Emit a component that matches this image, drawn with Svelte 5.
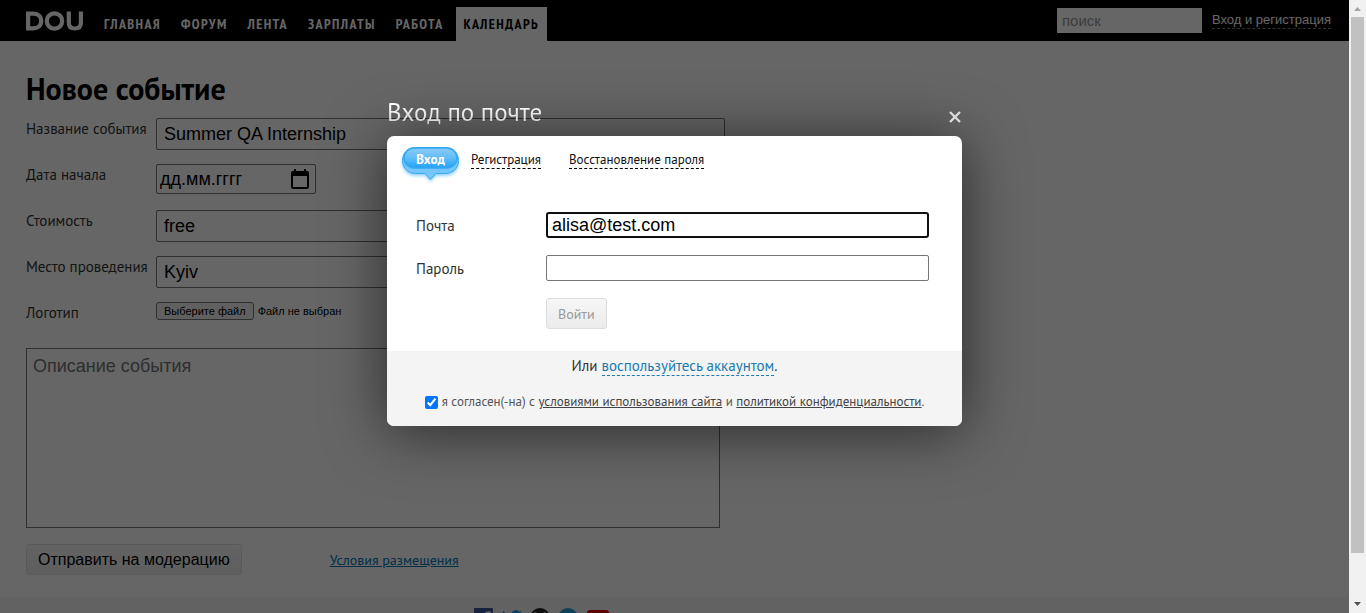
<script>
  const nav = ['Главная', 'Форум', 'Лента', 'Зарплаты', 'Работа', 'Календарь'];
  const active = 'Календарь';
  let search = $state('');
  let title = $state('Summer QA Internship');
  let date = $state('дд.мм.гггг');
  let price = $state('free');
  let place = $state('Kyiv');
  let about = $state('');
  let email = $state('alisa@test.com');
  let password = $state('');
  let agreed = $state(true);
</script>

<div class="window">
  <div class="page">
    <header>
      <a class="logo" href="#main" aria-label="DOU">
        <svg width="57" height="20" viewBox="0 0 57 20" fill="none" stroke="#fff" stroke-width="4.200">
          <path d="M2.100 2.600H7C12 2.600 15.200 5.200 15.200 10S12 17.400 7 17.400H2.100Z" />
          <circle cx="28.500" cy="10" r="7.700" />
          <path d="M42.800 .5V11.500C42.800 15.400 45 17.500 48.900 17.500S54.900 15.400 54.900 11.500V.5" />
        </svg>
      </a>
      <nav>
        {#each nav as item}
          <a href="#{item}" class:active={item === active}>{item}</a>
        {/each}
      </nav>
      <div class="user">
        <input class="search" type="text" placeholder="поиск" aria-label="поиск" bind:value={search} />
        <a href="#login">Вход и регистрация</a>
      </div>
    </header>

    <main>
      <h1>Новое событие</h1>
      <form class="event">
        <div class="row">
          <label for="title">Название события</label>
          <input id="title" class="field" type="text" bind:value={title} />
        </div>
        <div class="row">
          <label for="date">Дата начала</label>
          <div class="date">
            <input id="date" type="text" bind:value={date} />
            <button type="button" aria-label="Календарь">
              <svg width="18" height="20" viewBox="0 0 18 20">
                <path fill="#000" fill-rule="evenodd" d="M3 0H5V2H13V0H15V2H16Q18 2 18 4V18Q18 20 16 20H2Q0 20 0 18V4Q0 2 2 2H3ZM2 7V18H16V7Z" />
              </svg>
            </button>
          </div>
        </div>
        <div class="row">
          <label for="price">Стоимость</label>
          <input id="price" class="field" type="text" bind:value={price} />
        </div>
        <div class="row">
          <label for="place">Место проведения</label>
          <input id="place" class="field" type="text" bind:value={place} />
        </div>
        <div class="row">
          <label for="logo">Логотип</label>
          <div class="file">
            <button type="button">Выберите файл</button>
            <span>Файл не выбран</span>
            <input id="logo" type="file" hidden />
          </div>
        </div>
        <textarea placeholder="Описание события" aria-label="Описание события" bind:value={about}></textarea>
        <div class="actions">
          <button class="submit" type="button">Отправить на модерацию</button>
          <a href="#terms">Условия размещения</a>
        </div>
      </form>
    </main>

    <footer>
      <a href="#facebook" aria-label="Facebook">
        <svg width="20" height="20" viewBox="0 0 20 20">
          <rect width="19" height="20" rx="1" fill="#3b5998" />
          <path fill="#fff" d="M13.500 20V12.500H16L16.500 9.500H13.500V7.500Q13.500 6 15 6H16.700V3.200H14.200Q10.500 3.200 10.500 7V9.500H8V12.500H10.500V20Z" />
        </svg>
      </a>
      <a href="#twitter" aria-label="Twitter">
        <svg width="20" height="20" viewBox="0 0 20 20">
          <path fill="#1da1f2" d="M20 4Q19 4.600 17.700 4.700Q19 3.800 19.500 2.400Q18.200 3.200 16.900 3.400A4.100 4.100 0 0 0 9.900 7.200Q4.700 7 1.400 2.800Q-.2 6 2.700 8.300L.8 7.800Q1 10.900 4.100 11.800L2.300 11.900Q3.300 14.500 6.100 14.700Q3.500 16.700 0 16.400C9 21.800 18.700 16 18 6.100Q19.300 5.200 20 4Z" />
        </svg>
      </a>
      <a href="#github" aria-label="GitHub">
        <svg width="20" height="20" viewBox="0 0 20 20">
          <circle cx="10" cy="10" r="10" fill="#222" />
          <path fill="#fff" d="M4.500 4L7.300 5.100H12.700L15.500 4Q16.600 7 16 10Q15 13.500 12.500 14V20H7.500V14Q5 13.500 4 10Q3.400 7 4.500 4Z" />
        </svg>
      </a>
      <a href="#telegram" aria-label="Telegram">
        <svg width="20" height="20" viewBox="0 0 20 20">
          <circle cx="10" cy="10" r="10" fill="#2aa1da" />
          <path fill="#fff" d="M3.500 10L15.500 5L13.500 15.500L9.700 12.700L8 14.400L7.500 11.400Z" />
        </svg>
      </a>
      <a href="#youtube" aria-label="YouTube">
        <svg width="23" height="20" viewBox="0 0 23 20">
          <rect x="1" y="2" width="22" height="16" rx="3" fill="#f00000" />
          <path fill="#fff" d="M9.500 6V14L16 10Z" />
        </svg>
      </a>
    </footer>

    <div class="overlay">
      <div class="dialog" role="dialog" aria-labelledby="dialog-title">
        <div class="head">
          <h2 id="dialog-title">Вход по почте</h2>
          <button class="close" type="button" aria-label="Закрыть">
            <svg width="12" height="12" viewBox="0 0 12 12">
              <path d="M1 1L11 11M11 1L1 11" stroke="#ddd" stroke-width="2.300" />
            </svg>
          </button>
        </div>
        <div class="card">
          <div class="tabs">
            <button class="bubble" type="button">
              <svg width="65" height="44" viewBox="-4 -2 65 44" aria-hidden="true">
                <defs>
                  <linearGradient id="gloss" x1="0" y1="0" x2="0" y2="1">
                    <stop offset="0" stop-color="#8acbf8" />
                    <stop offset=".5" stop-color="#62bdf8" />
                    <stop offset="1" stop-color="#22a2f8" />
                  </linearGradient>
                  <filter id="glow" x="-20%" y="-20%" width="140%" height="150%">
                    <feDropShadow dx="0" dy="2" stdDeviation="1.500" flood-color="#2aa8f8" flood-opacity=".5" />
                  </filter>
                </defs>
                <path filter="url(#glow)" fill="#74c6fb" stroke="#3ba8ea" d="M13.500 .5H43.500C51 .5 56.500 6 56.500 13.500S51 26.500 43.500 26.500H34L28.500 32.500L23 26.500H13.500C6 26.500 .5 21 .5 13.500S6 .5 13.500 .5Z" />
                <rect x="2" y="1" width="53" height="20" rx="10" fill="url(#gloss)" stroke="#36a8f4" stroke-width="1.500" />
              </svg>
              <span>Вход</span>
            </button>
            <a href="#register">Регистрация</a>
            <a href="#restore">Восстановление пароля</a>
          </div>
          <form class="login">
            <label for="email">Почта</label>
            <input id="email" class="focused" type="text" bind:value={email} />
            <label for="password">Пароль</label>
            <input id="password" type="password" bind:value={password} />
            <button type="button" disabled>Войти</button>
          </form>
          <div class="bottom">
            <p>Или <a href="#account">воспользуйтесь аккаунтом</a>.</p>
            <div class="agree">
              <input id="agree" type="checkbox" bind:checked={agreed} />
              <label for="agree">я согласен(-на) с <a href="#rules">условиями использования сайта</a> и <a href="#privacy">политикой конфиденциальности</a>.</label>
            </div>
          </div>
        </div>
      </div>
    </div>
  </div>

  <div class="scrollbar" aria-hidden="true">
    <svg width="17" height="17" viewBox="0 0 17 17"><path d="M5 11L8.500 7L12 11Z" fill="#a3a3a3" /></svg>
    <div class="thumb"></div>
    <svg width="17" height="17" viewBox="0 0 17 17"><path d="M5 6L8.500 10L12 6Z" fill="#505050" /></svg>
  </div>
</div>

<style>
  :global(body) {
    margin: 0;
  }
  .window {
    display: flex;
    height: 100vh;
    overflow: hidden;
    font-family: 'PT Sans', 'Open Sans', sans-serif;
    font-size: 15px;
    color: #333;
  }
  .window * {
    box-sizing: border-box;
  }
  button,
  input,
  textarea {
    margin: 0;
    font-family: 'Liberation Sans', Arial, sans-serif;
  }
  .page {
    position: relative;
    flex: 1;
    overflow: hidden;
    background: #fff;
  }
  header {
    display: flex;
    height: 41px;
    padding: 0 18px 0 26px;
    background: #000;
  }
  .logo {
    padding-top: 11px;
  }
  nav {
    display: flex;
    gap: 4px;
    margin: 7px 0 0 13px;
  }
  nav a {
    padding: 0 8px;
    color: #fff;
    font: bold 14px/34px 'PT Sans Narrow', 'Roboto Condensed', Roboto, sans-serif;
    letter-spacing: 0.1em;
    text-decoration: none;
    text-transform: uppercase;
  }
  nav a.active {
    background: #fff;
    color: #000;
  }
  .user {
    display: flex;
    align-items: flex-start;
    gap: 10px;
    margin-left: auto;
    padding-top: 8px;
  }
  .search {
    width: 145px;
    height: 25px;
    padding: 0 5px;
    border: 0;
    background: #fff;
    font-size: 15px;
  }
  .search::placeholder {
    color: #999;
  }
  .user a {
    margin-top: 4px;
    border-bottom: 1px dashed #777;
    color: #fff;
    font: 13px/16px 'Liberation Sans', sans-serif;
    text-decoration: none;
  }
  main {
    height: 556px;
    padding: 26px;
  }
  h1 {
    margin: 0 0 7px;
    color: #000;
    font-size: 30px;
    line-height: 44px;
  }
  .event {
    max-width: 699px;
  }
  .row {
    display: flex;
    align-items: flex-start;
    height: 46px;
  }
  .row label {
    width: 130px;
    line-height: 22px;
    white-space: nowrap;
  }
  .field {
    flex: 1;
    height: 32px;
    padding: 0 7px;
    border: 1px solid #767676;
    border-radius: 2px;
    font-size: 18px;
  }
  .date {
    display: flex;
    align-items: center;
    width: 160px;
    height: 30px;
    padding: 0 6px 0 3px;
    border: 1px solid #767676;
    border-radius: 2px;
  }
  .date input {
    flex: 1;
    min-width: 0;
    padding: 0;
    border: 0;
    font-size: 18px;
  }
  .date button {
    display: flex;
    padding: 0;
    border: 0;
    background: none;
  }
  .file {
    display: flex;
    gap: 4px;
    color: #000;
    font: 11px/18px 'Liberation Sans', sans-serif;
  }
  .file button {
    height: 18px;
    padding: 0 7px;
    border: 1px solid #767676;
    border-radius: 3px;
    background: #efefef;
    font-size: 11px;
  }
  textarea {
    display: block;
    width: calc(100% - 5px);
    height: 180px;
    padding: 7px 6px;
    border: 1px solid #767676;
    font-size: 18px;
    line-height: 20px;
    resize: none;
  }
  textarea::placeholder {
    color: #757575;
  }
  .actions {
    display: flex;
    gap: 88px;
    margin-top: 16px;
    font-size: 14px;
    line-height: 32px;
  }
  .submit {
    height: 31px;
    padding: 0 11px;
    border: 1px solid #e0e0e0;
    border-radius: 3px;
    background: linear-gradient(#f8f8f8, #ebebeb);
    color: #000;
    font-size: 16px;
  }
  .actions a {
    color: #0077b5;
  }
  footer {
    display: flex;
    gap: 8px;
    height: 60px;
    padding: 11px 26px 0 474px;
    background: #f4f4f4;
  }
  .overlay {
    position: absolute;
    inset: 0;
    display: flex;
    justify-content: center;
    align-items: flex-start;
    padding-top: 96px;
    background: rgba(0, 0, 0, 0.6);
  }
  .dialog {
    width: 575px;
  }
  .head {
    display: flex;
    justify-content: space-between;
    height: 40px;
    position: relative;
    z-index: 1;
  }
  h2 {
    margin: 0;
    background: linear-gradient(#fff 20%, #bbb 90%);
    background-clip: text;
    color: transparent;
    font-size: 25px;
    font-weight: 400;
    line-height: 32px;
  }
  .close {
    display: flex;
    padding: 15px 1px 0;
    border: 0;
    background: none;
  }
  .card {
    overflow: hidden;
    border-radius: 7px;
    background: #fff;
    box-shadow: 0 5px 60px rgba(0, 0, 0, 0.6);
  }
  .tabs {
    display: flex;
    align-items: flex-start;
    height: 76px;
    padding: 11px 15px 0;
    font-size: 13px;
    line-height: 16px;
  }
  .tabs a {
    margin: 5px 28px 0 0;
    border-bottom: 1px dashed #000;
    color: #111;
    text-decoration: none;
  }
  .bubble {
    position: relative;
    width: 57px;
    height: 26px;
    margin-right: 12px;
    padding: 0;
    border: 0;
    background: none;
    color: #fff;
    font: bold 13px/26px 'PT Sans', 'Open Sans', sans-serif;
  }
  .bubble svg {
    position: absolute;
    top: -2px;
    left: -4px;
  }
  .bubble span {
    position: relative;
  }
  .login {
    display: grid;
    grid-template-columns: 130px 1fr;
    row-gap: 17px;
    padding: 0 33px 22px 29px;
  }
  .login label {
    height: 26px;
    line-height: 28px;
  }
  .login input {
    height: 26px;
    padding: 0 5px;
    border: 1px solid #767676;
    border-radius: 2px;
    font-size: 18px;
  }
  .login input.focused {
    padding: 0 4px;
    border: 2px solid #101010;
    border-radius: 3px;
    outline: none;
  }
  .login button {
    grid-column: 2;
    justify-self: start;
    height: 31px;
    padding: 0 11px;
    border: 1px solid #ddd;
    border-radius: 3px;
    background: linear-gradient(#f7f7f7, #ebebeb);
    color: #999;
    font: 14px 'PT Sans', 'Open Sans', sans-serif;
  }
  .bottom {
    height: 75px;
    padding-top: 6px;
    background: #f4f4f4;
    text-align: center;
  }
  .bottom p {
    margin: 0;
    line-height: 18px;
  }
  .bottom p a {
    border-bottom: 1px dashed #1a7ab0;
    color: #1a7ab0;
    text-decoration: none;
  }
  .agree {
    display: flex;
    justify-content: center;
    align-items: center;
    gap: 4px;
    margin-top: 18px;
    color: #555;
    font-size: 13px;
    line-height: 18px;
    white-space: nowrap;
  }
  .agree input {
    width: 13px;
    height: 13px;
    accent-color: #0075ff;
  }
  .agree a {
    color: #444;
  }
  .scrollbar {
    display: flex;
    flex-direction: column;
    width: 17px;
    background: #f1f1f1;
  }
  .thumb {
    height: 536px;
    margin: 0 2px auto;
    background: #c1c1c1;
  }
</style>
